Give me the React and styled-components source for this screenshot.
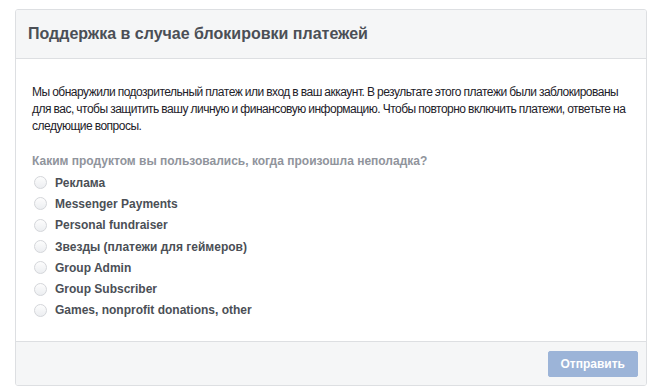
import React from 'react';
import styled, { createGlobalStyle } from 'styled-components';

const GlobalStyle = createGlobalStyle`
  body {
    margin: 0;
    background: #fff;
    font-family: "Liberation Sans", Arial, sans-serif;
  }
`;

const options = [
  'Реклама',
  'Messenger Payments',
  'Personal fundraiser',
  'Звезды (платежи для геймеров)',
  'Group Admin',
  'Group Subscriber',
  'Games, nonprofit donations, other',
];

function App() {
  return (
    <Page>
      <GlobalStyle />
      <Card>
        <Header>
          <Title>Поддержка в случае блокировки платежей</Title>
        </Header>
        <Body>
          <Intro>
            Мы обнаружили подозрительный платеж или вход в ваш аккаунт. В результате этого платежи были заблокированы
            <br />
            для вас, чтобы защитить вашу личную и финансовую информацию. Чтобы повторно включить платежи, ответьте на
            <br />
            следующие вопросы.
          </Intro>
          <Question>Каким продуктом вы пользовались, когда произошла неполадка?</Question>
          <Options>
            {options.map((o) => (
              <Option key={o}>
                <Radio />
                <span>{o}</span>
              </Option>
            ))}
          </Options>
        </Body>
        <Footer>
          <SubmitButton disabled>Отправить</SubmitButton>
        </Footer>
      </Card>
    </Page>
  );
}

export default App;

const Page = styled.div`
  padding: 9px 10px 0 15px;
`;

const Card = styled.div`
  width: 630px;
  border: 1px solid #dddfe2;
  border-radius: 3px;
  background: #fff;
  overflow: hidden;
`;

const Header = styled.div`
  height: 48px;
  background: #f5f6f7;
  border-bottom: 1px solid #dddfe2;
  display: flex;
  align-items: center;
  padding: 0 12px;
`;

const Title = styled.h2`
  margin: 0;
  font-size: 16px;
  font-weight: bold;
  color: #4b4f56;
`;

const Body = styled.div`
  padding: 25px 16px 20px 16px;
`;

const Intro = styled.p`
  margin: 0 0 18px;
  font-size: 12px;
  line-height: 17px;
  letter-spacing: -0.5px;
  word-spacing: -0.3px;
  white-space: nowrap;
  color: #1d2129;
`;

const Question = styled.div`
  font-size: 12px;
  line-height: 16px;
  font-weight: bold;
  color: #90949c;
  margin-bottom: 3px;
`;

const Options = styled.div`
  display: flex;
  flex-direction: column;
  padding-left: 2px;
`;

const Option = styled.label`
  display: flex;
  align-items: center;
  gap: 8px;
  height: 21.3px;
  font-size: 12px;
  font-weight: bold;
  color: #4b4f56;
`;

const Radio = styled.span`
  flex: none;
  width: 13px;
  height: 13px;
  border-radius: 50%;
  border: 1px solid #d4d6da;
  background: linear-gradient(#fdfdfd, #eceef1);
  box-sizing: border-box;
`;

const Footer = styled.div`
  height: 43px;
  background: #f5f6f7;
  border-top: 1px solid #dddfe2;
  display: flex;
  align-items: center;
  justify-content: flex-end;
  padding: 0 8px;
`;

const SubmitButton = styled.button`
  height: 26px;
  padding: 0 12px;
  border: 1px solid #9cb4d8;
  border-radius: 2px;
  background: #9cb4d8;
  color: #fff;
  font-family: "Liberation Sans", Arial, sans-serif;
  font-size: 12px;
  font-weight: bold;
`;
